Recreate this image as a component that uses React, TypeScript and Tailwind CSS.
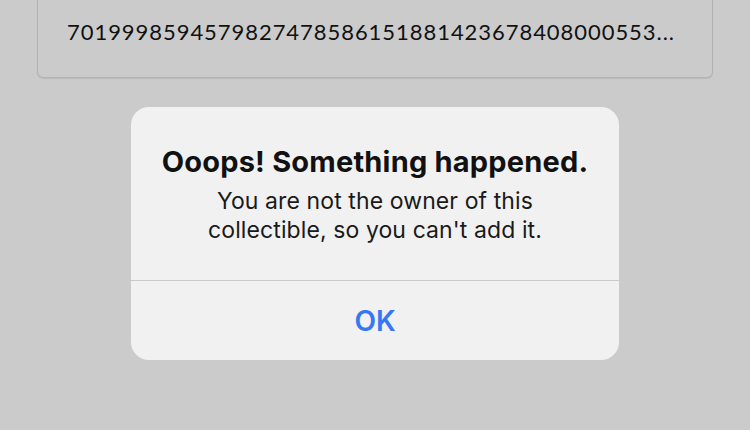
export default function App() {
  return (
    <div className="w-[750px] h-[430px] bg-[#cbcbcb] overflow-hidden flex flex-col">
      {/* TOKEN ID FIELD */}
      <div className="mx-[37px] h-[78px] shrink-0 border-x-[1.5px] border-b-[1.5px] border-[#b2b2b2] rounded-b-[6px] shadow-[0_1px_1px_rgba(0,0,0,0.08)] flex items-start pl-[29px] pt-[17px]">
        <span
          className="text-[22px] leading-[30px] text-[#111] tracking-[0.95px]"
          style={{ fontFamily: "Lato, 'Liberation Sans', sans-serif" }}
        >
          7019998594579827478586151881423678408000553...
        </span>
      </div>

      {/* ALERT */}
      <div
        className="mt-[29px] mx-auto w-[488px] h-[253px] bg-[#f1f1f1] rounded-[18px] flex flex-col"
        style={{ fontFamily: "Inter, 'Liberation Sans', sans-serif" }}
      >
        <div className="h-[173px] flex flex-col items-center pt-[38px] text-[#111]">
          <h2 className="text-[29px] leading-[34px] font-bold tracking-[0.2px]">
            Ooops! Something happened.
          </h2>
          <p className="mt-[8px] text-[23px] leading-[29px] tracking-[0.1px] text-center text-[#1a1a1a]">
            You are not the owner of this
            <br />
            collectible, so you can't add it.
          </p>
        </div>
        <div className="h-px bg-[#c9c9c9]" />
        <button className="flex-1 flex items-center justify-center text-[28px] font-semibold text-[#3478f6]">
          OK
        </button>
      </div>
    </div>
  );
}
